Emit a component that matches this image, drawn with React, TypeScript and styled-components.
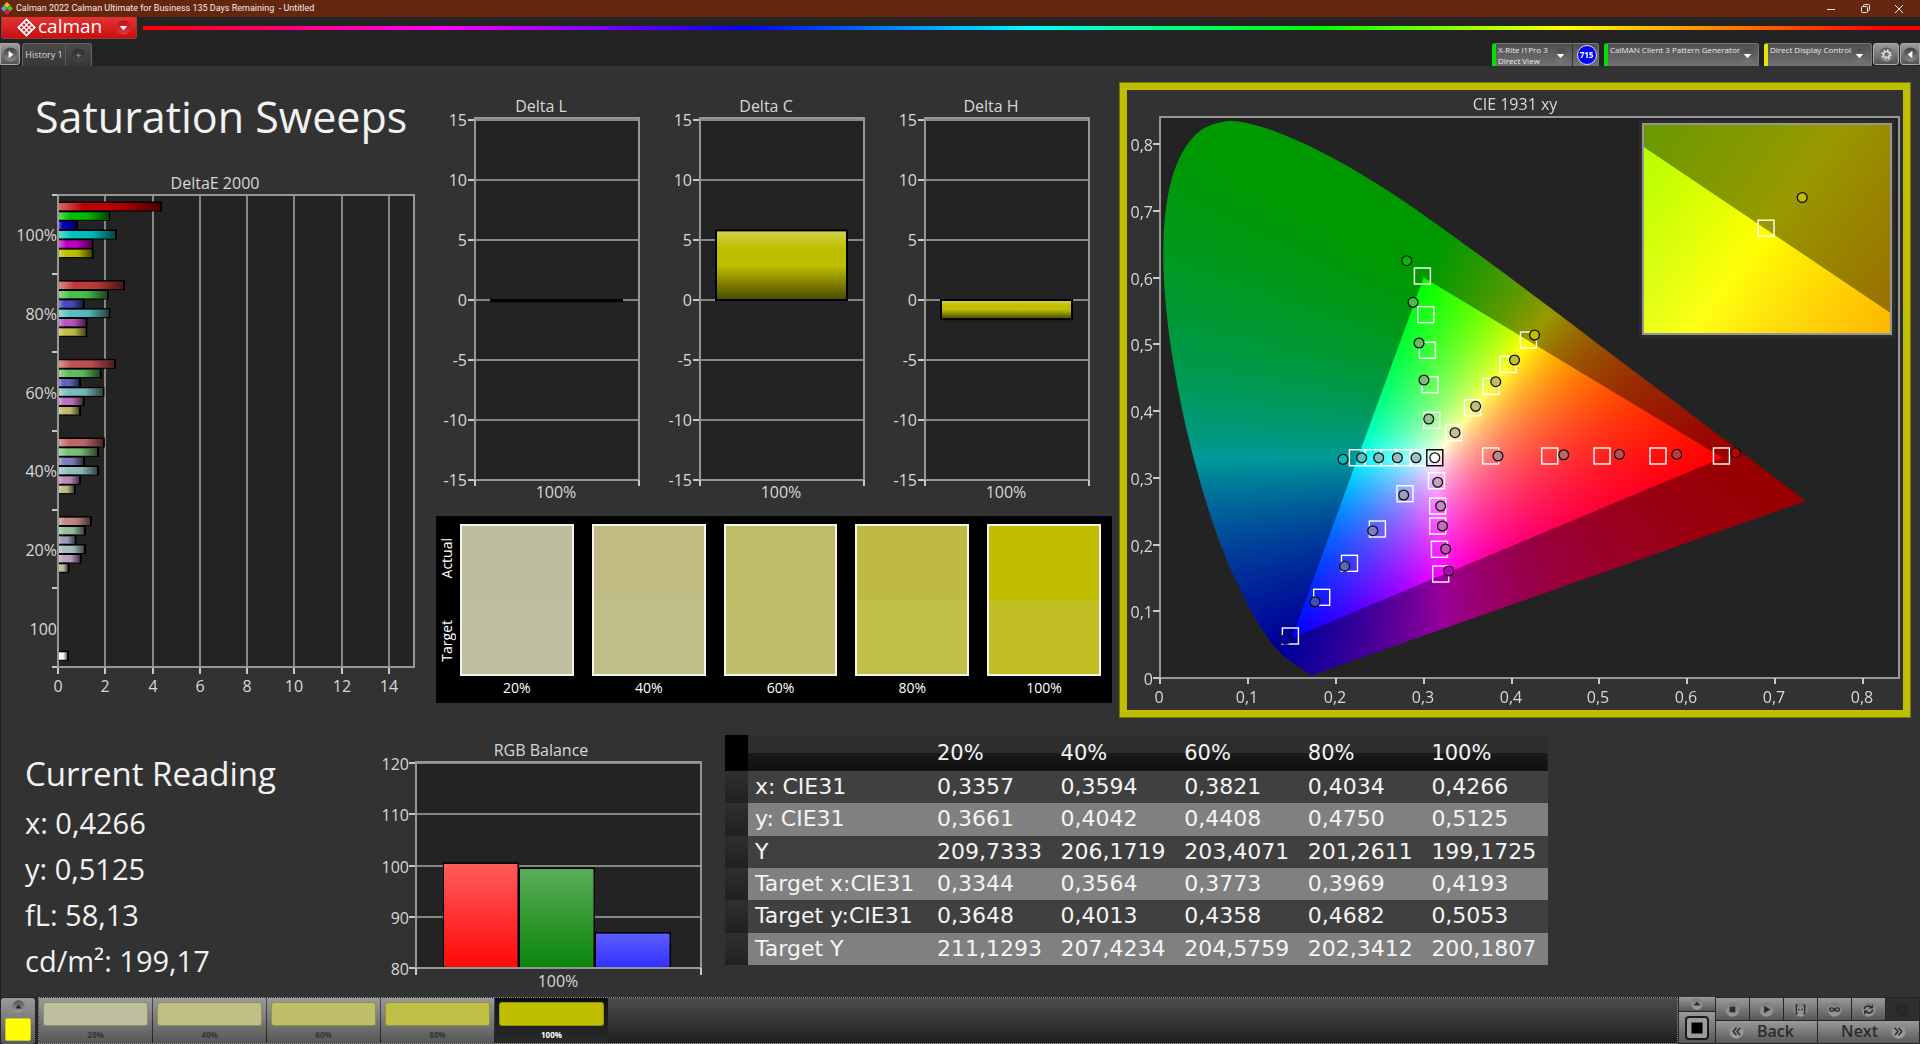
import React, { useLayoutEffect, useRef } from "react";
import styled, { createGlobalStyle, css } from "styled-components";

const GlobalStyle = createGlobalStyle`
  *, *::before, *::after { box-sizing: border-box; }
  body { margin: 0; background: #323232; font-family: "Open Sans", "Noto Sans", sans-serif; color: #f2f2f2; }
  button { font: inherit; color: inherit; margin: 0; padding: 0; border: 0; background: none; cursor: pointer; }
  h1, h2, p, ul, figure { margin: 0; padding: 0; }
`;

/* ---------- data ---------- */

const LEVELS = ["100%", "80%", "60%", "40%", "20%"];
const LOWS = [
  ["00", "3a", "50", "66", "86"],
  ["00", "48", "60", "78", "98"],
  ["00", "48", "62", "7c", "9c"],
  ["00", "58", "78", "90", "a4"],
  ["00", "50", "70", "88", "a2"],
  ["00", "48", "68", "84", "a0"],
];
const HUES: ((low: string) => string)[] = [
  (l) => `#bf${l}${l}`,
  (l) => `#${l}bf${l}`,
  (l) => `#${l}${l}bf`,
  (l) => `#${l}bfbf`,
  (l) => `#bf${l}bf`,
  (l) => `#bfbf${l}`,
];
const patchColor = (hue: number, level: number) => HUES[hue](LOWS[hue][level]);

const DELTA_E = [
  [4.36, 2.17, 0.8, 2.45, 1.46, 1.46],
  [2.79, 2.11, 1.08, 2.17, 1.2, 1.2],
  [2.41, 1.8, 0.93, 1.92, 1.08, 0.93],
  [1.94, 1.69, 1.1, 1.69, 0.93, 0.7],
  [1.39, 1.14, 0.74, 1.14, 0.95, 0.44],
];

const SWATCHES = [
  { label: "20%", actual: "#bfbda0", target: "#bfbfa3" },
  { label: "40%", actual: "#bfbb82", target: "#bfbe86" },
  { label: "60%", actual: "#bebc67", target: "#bfbe6a" },
  { label: "80%", actual: "#bfbb42", target: "#bfbf4a" },
  { label: "100%", actual: "#c1bd00", target: "#c1bf23" },
];

const STRIP = [
  { label: "20%", color: "#bfbfa0" },
  { label: "40%", color: "#bfbe84" },
  { label: "60%", color: "#bfbf69" },
  { label: "80%", color: "#bfbf48" },
  { label: "100%", color: "#bfbf00" },
];

const COLUMNS = ["20%", "40%", "60%", "80%", "100%"];
const READINGS: [string, string[]][] = [
  ["x: CIE31", ["0,3357", "0,3594", "0,3821", "0,4034", "0,4266"]],
  ["y: CIE31", ["0,3661", "0,4042", "0,4408", "0,4750", "0,5125"]],
  ["Y", ["209,7333", "206,1719", "203,4071", "201,2611", "199,1725"]],
  ["Target x:CIE31", ["0,3344", "0,3564", "0,3773", "0,3969", "0,4193"]],
  ["Target y:CIE31", ["0,3648", "0,4013", "0,4358", "0,4682", "0,5053"]],
  ["Target Y", ["211,1293", "207,4234", "204,5759", "202,3412", "200,1807"]],
];

type XY = [number, number];

/* Sweeps run from full saturation to 20%, in the order of HUES. */
const TARGETS: XY[][] = [
  [[0.6389, 0.3326], [0.5667, 0.3326], [0.503, 0.3326], [0.4435, 0.3326], [0.3763, 0.3326]],
  [[0.2986, 0.6022], [0.3024, 0.5443], [0.3043, 0.4909], [0.3072, 0.4394], [0.3092, 0.386]],
  [[0.1484, 0.0629], [0.184, 0.1209], [0.2156, 0.1718], [0.2474, 0.2232], [0.2788, 0.2761]],
  [[0.2246, 0.33], [0.2424, 0.33], [0.2603, 0.33], [0.2773, 0.33], [0.294, 0.33]],
  [[0.3194, 0.1558], [0.318, 0.1928], [0.316, 0.2277], [0.316, 0.2577], [0.3146, 0.2956]],
  [[0.4193, 0.5063], [0.3962, 0.4699], [0.3769, 0.4369], [0.3557, 0.4049], [0.334, 0.3675]],
];
const ACTUALS: XY[][] = [
  [[0.6552, 0.3376], [0.588, 0.3351], [0.5228, 0.3351], [0.4594, 0.3345], [0.3846, 0.3326]],
  [[0.2808, 0.6252], [0.288, 0.5628], [0.2948, 0.5019], [0.3004, 0.4464], [0.3058, 0.388]],
  [[0.143, 0.0581], [0.1764, 0.1143], [0.2102, 0.1673], [0.2421, 0.2207], [0.2773, 0.2742]],
  [[0.2083, 0.3276], [0.2295, 0.33], [0.2489, 0.33], [0.2701, 0.33], [0.2913, 0.33]],
  [[0.3285, 0.1603], [0.3251, 0.1933], [0.3214, 0.2277], [0.3194, 0.2577], [0.316, 0.2932]],
  [[0.4262, 0.5139], [0.4034, 0.4764], [0.3821, 0.4439], [0.3592, 0.407], [0.3357, 0.3675]],
];

const LOCUS: XY[] = [
  [0.1741, 0.005], [0.1714, 0.0051], [0.1689, 0.0069], [0.1644, 0.0109], [0.1566, 0.0177], [0.144, 0.0297],
  [0.1355, 0.0399], [0.1241, 0.0578], [0.1096, 0.0868], [0.0913, 0.1327], [0.0687, 0.2007], [0.0454, 0.295],
  [0.0235, 0.4127], [0.0082, 0.5384], [0.0039, 0.6548], [0.0139, 0.7502], [0.0389, 0.812], [0.0743, 0.8338],
  [0.1142, 0.8262], [0.1547, 0.8059], [0.1929, 0.7816], [0.2296, 0.7543], [0.2658, 0.7243], [0.3016, 0.6923],
  [0.3731, 0.6245], [0.4441, 0.5547], [0.5125, 0.4866], [0.5752, 0.4242], [0.627, 0.3725], [0.6658, 0.334],
  [0.6915, 0.3083], [0.719, 0.2809], [0.7347, 0.2653],
];
const PRIMARIES: XY[] = [[0.64, 0.33], [0.3, 0.6], [0.15, 0.06]];

/* ---------- frame ---------- */

const Page = styled.div`
  min-height: 100vh;
  display: flex;
  flex-direction: column;
  background: #323232;
`;

const TitleBar = styled.header`
  height: 17px;
  display: flex;
  align-items: center;
  gap: 3px;
  padding: 0 15px 0 1px;
  background: #64260f;
  font-family: Roboto, "Open Sans", sans-serif;
  font-size: 9px;
  line-height: 17px;
  color: #f4ece9;
  white-space: pre;
`;
const WindowControls = styled.div`
  margin-left: auto;
  display: flex;
  gap: 22px;
`;
const WindowButton = styled.button`
  width: 12px;
  height: 17px;
  display: grid;
  place-items: center;
`;

const Brand = styled.div`
  height: 26px;
  display: flex;
  align-items: flex-start;
  background: #232323;
  gap: 6px;
  padding-left: 1px;
`;
const BrandButton = styled.button`
  width: 136px;
  height: 22px;
  display: flex;
  align-items: center;
  gap: 2px;
  padding: 0 5px 0 15px;
  border: 1px solid #8a4040;
  border-top: 0;
  border-radius: 0 0 3px 3px;
  background: linear-gradient(#e23434, #c90f10);
  color: #fff;
  font-size: 19px;
  line-height: 20px;
  font-weight: 500;
  svg:last-child { margin-left: auto; }
`;
const BrandName = styled.span`
  padding-bottom: 4px;
`;
const Spectrum = styled.div`
  flex: 1;
  height: 4px;
  margin-top: 9px;
  background: linear-gradient(to right, #f00, #f0f 17%, #00f 34%, #0ff 50%, #0f0 66%, #ff0 80%, #f00 98%);
`;

const TabRow = styled.nav`
  height: 23px;
  display: flex;
  align-items: flex-start;
  background: #232323;
  font-size: 9px;
`;
const EdgeButton = styled.button<{ $w: number; $side?: "left" | "right" }>`
  width: ${(p) => p.$w}px;
  height: 22px;
  display: grid;
  place-items: center;
  border: 1px solid #aaa;
  border-radius: ${(p) => (p.$side === "left" ? "0 3px 3px 0" : p.$side === "right" ? "3px 0 0 3px" : "3px")};
  background: linear-gradient(#9a9a9a, #555);
`;
const HistoryTabs = styled.div`
  margin-left: 2px;
  display: flex;
  height: 23px;
  border: 1px solid #666;
  border-bottom: 0;
  border-radius: 3px 3px 0 0;
  background: linear-gradient(#4b4b4b, #363636);
  color: #ddd;
`;
const Tab = styled.button`
  width: 43px;
  line-height: 22px;
  border-right: 1px solid #5c5c5c;
`;
const AddTab = styled.button`
  width: 25px;
  display: grid;
  place-items: center;
`;
const Devices = styled.div`
  margin-left: auto;
  display: flex;
  align-items: flex-start;
  gap: 5px;
`;
const Device = styled.div<{ $w: number; $light: string }>`
  width: ${(p) => p.$w}px;
  height: 23px;
  display: flex;
  border: 1px solid #777;
  border-bottom: 0;
  border-left: 4px solid ${(p) => p.$light};
  border-radius: 3px 3px 0 0;
  background: linear-gradient(#505050, #727272);
`;
const DeviceMenu = styled.button`
  flex: 1;
  display: flex;
  align-items: flex-start;
  justify-content: space-between;
  padding: 0 4px 0 2px;
  text-align: left;
  font-size: 8px;
  line-height: 11px;
  font-weight: 500;
  color: #ececec;
  white-space: pre;
  svg { margin-top: 4px; }
`;
const Counter = styled.span`
  width: 26px;
  height: 22px;
  padding-left: 2px;
  display: grid;
  place-items: center;
  border-left: 1px solid #333;
`;
const CounterBadge = styled.span`
  width: 20px;
  height: 20px;
  border-radius: 50%;
  border: 1px solid #ddd;
  background: #0000ff;
  font-size: 8px;
  line-height: 18px;
  font-weight: 700;
  text-align: center;
  color: #fff;
`;
const EdgeGroup = styled.div`
  display: flex;
  gap: 1px;
  margin-left: -4px;
`;

/* ---------- workspace ---------- */

const Workspace = styled.main`
  flex: 1;
  border-left: 1px solid #1e1e1e;
  background: #323232;
`;
const TopRow = styled.section`
  display: grid;
  grid-template-columns: 429fr 689fr 792fr 9fr;
  align-items: start;
`;
const Heading = styled.h1`
  margin: 22px 0 28px;
  padding-left: 34px;
  font-size: 43px;
  line-height: 58px;
  font-weight: 400;
`;
const Chart = styled.svg`
  display: block;
  width: 100%;
  height: auto;
  font-size: 16px;
  fill: #d8d8d8;
`;
const Middle = styled.div`
  padding-top: 30px;
`;
const DeltaRow = styled.div`
  display: grid;
  grid-template-columns: repeat(3, 1fr);
  padding-right: 14px;
`;

const SwatchPanel = styled.section`
  margin: 10px 7px 0 6px;
  padding: 8px 11px 3px 0;
  display: flex;
  background: #000;
  color: #fff;
  font-size: 14px;
`;
const SwatchSides = styled.div`
  width: 24px;
  height: 152px;
  padding: 14px 0;
  display: flex;
  flex-direction: column;
  justify-content: space-between;
  span {
    writing-mode: vertical-rl;
    transform: rotate(180deg);
    line-height: 22px;
  }
`;
const SwatchList = styled.ul`
  flex: 1;
  display: grid;
  grid-template-columns: repeat(5, 1fr);
  gap: 18px;
  list-style: none;
  text-align: center;
  line-height: 24px;
`;
const Swatch = styled.div<{ $actual: string; $target: string }>`
  height: 152px;
  border: 2px solid #f4f4e8;
  background: linear-gradient(${(p) => p.$actual} 50%, ${(p) => p.$target} 50%);
`;

const CiePanel = styled.section`
  position: relative;
  margin-top: 16px;
  border: 8px solid #bfbf00;
  outline: 1px solid #76760a;
  outline-offset: -1px;
`;
const GamutCanvas = styled.canvas`
  position: absolute;
  inset: 0;
  width: 100%;
  height: 100%;
`;
const CieOverlay = styled(Chart)`
  position: relative;
`;

const BottomRow = styled.section`
  display: flex;
  align-items: flex-start;
`;
const Current = styled.div`
  width: 369px;
  padding: 30px 0 0 24px;
`;
const CurrentTitle = styled.h2`
  font-size: 33px;
  line-height: 52px;
  font-weight: 400;
`;
const CurrentValue = styled.p`
  font-size: 29px;
  line-height: 46px;
`;
const BalanceChart = styled.div`
  width: 340px;
  padding-top: 20px;
`;

const DataTable = styled.table`
  margin: 17px 0 0 15px;
  border-collapse: collapse;
  table-layout: fixed;
  width: 823px;
  height: 230px;
  font-family: "DejaVu Sans", sans-serif;
  font-size: 22px;
  line-height: 28px;
  color: #f4f4f4;
  th, td { padding: 2px 0 2px 7px; text-align: left; font-weight: 400; white-space: nowrap; }
`;
const HeadRow = styled.tr`
  height: 36px;
  font-size: 21px;
  background: linear-gradient(#2d2d2d 50%, #1a1a1a 50%, #101010);
`;
const BodyRow = styled.tr<{ $light: boolean }>`
  background: ${(p) => (p.$light ? "#808080" : "#404040")};
`;
const Gutter = styled.td<{ $head?: boolean }>`
  width: 23px;
  background: ${(p) => (p.$head ? "#000" : "linear-gradient(#303030, #202020)")};
`;
const NameCol = styled.col`
  width: 182px;
`;
const GutterCol = styled.col`
  width: 23px;
`;

/* ---------- bottom bar ---------- */

const steel = css`
  background: linear-gradient(#9a9a9a, #585858);
`;
const Dock = styled.footer`
  height: 47px;
  display: flex;
  padding: 0 1px 0 1px;
  background: #262626;
`;
const DockToggle = styled.button`
  width: 34px;
  height: 46px;
  margin: 1px 3px 0 0;
  padding: 2px 4px 3px;
  display: flex;
  flex-direction: column;
  align-items: center;
  justify-content: space-between;
  border-radius: 3px;
  ${steel}
`;
const CurrentPatch = styled.span`
  width: 26px;
  height: 23px;
  border-radius: 2px;
  border: 1px solid #c8c83a;
  background: #ffff00;
`;
const Strip = styled.div`
  flex: 1;
  display: flex;
  gap: 1px;
  border: 1px dotted #8a8a8a;
  background: linear-gradient(#4c4c4c, #202020);
`;
const StripButton = styled.button<{ $on: boolean }>`
  width: 113px;
  padding: 4px 4px 0;
  display: flex;
  flex-direction: column;
  align-items: center;
  font-size: 8px;
  line-height: 17px;
  font-weight: 700;
  color: ${(p) => (p.$on ? "#fff" : "#333")};
  ${steel}
  ${(p) => p.$on && css`background: linear-gradient(#111, #2b2b2b);`}
`;
const StripPatch = styled.span<{ $color: string }>`
  width: 105px;
  height: 27px;
  border-radius: 3px;
  border: 1px solid rgba(90, 90, 40, 0.45);
  background: ${(p) => p.$color};
`;
const Controls = styled.div`
  margin-left: 1px;
  display: grid;
  grid-template-columns: 36px 203px;
  gap: 1px;
`;
const StopColumn = styled.div`
  display: grid;
  grid-template-rows: 14px 31px;
  gap: 1px;
`;
const Transport = styled.div`
  display: grid;
  grid-template-columns: repeat(6, 33px);
  grid-template-rows: 22px 22px;
  gap: 1px;
  padding-top: 1px;
`;
const SteelButton = styled.button<{ $off?: boolean }>`
  ${steel}
  display: flex;
  align-items: center;
  justify-content: center;
  ${(p) => p.$off && css`background: #2e2e2e;`}
`;
const StepButton = styled.button<{ $end?: boolean }>`
  ${steel}
  grid-column: span 3;
  display: flex;
  align-items: center;
  justify-content: ${(p) => (p.$end ? "flex-end" : "flex-start")};
  gap: 13px;
  padding: 0 13px 2px;
  font-size: 16px;
  line-height: 20px;
  font-weight: 600;
  color: #2b2b2b;
`;

/* ---------- small icons ---------- */

const Disc = ({ size = 15, dark = "#3d3d3d", light = "#7a7a7a", children }: { size?: number; dark?: string; light?: string; children?: React.ReactNode }) => {
  const id = `disc${dark.slice(1)}${light.slice(1)}`;
  return (
    <svg width={size} height={size} viewBox="0 0 16 16" aria-hidden="true">
      <defs>
        <linearGradient id={id} x1="0" y1="0" x2="0" y2="1">
          <stop offset="0" stopColor={dark} />
          <stop offset="1" stopColor={light} />
        </linearGradient>
      </defs>
      <circle cx="8" cy="8" r="7.6" fill={`url(#${id})`} />
      {children}
    </svg>
  );
};
const DownDisc = () => (
  <Disc dark="#4a4a4a" light="#777777"><path d="M4 6.5h8L8 11z" fill="#fff" /></Disc>
);

const AppIcon = () => (
  <svg width="12" height="13" viewBox="0 0 12 13" aria-hidden="true">
    <path d="M6 0l3 3-3 3-3-3z" fill="#f5c400" />
    <path d="M3 3.5l3 3-3 3-3-3z" fill="#3fb4ea" />
    <path d="M9 3.5l3 3-3 3-3-3z" fill="#4cc12c" />
    <path d="M6 7l3 3-3 3-3-3z" fill="#e8184f" />
  </svg>
);
const BrandMark = () => (
  <svg width="19" height="19" viewBox="0 0 19 19" aria-hidden="true">
    <path d="M9.5 .6 18.4 9.5 9.5 18.4 .6 9.5z" fill="#fff" stroke="#fff" strokeWidth="1" strokeLinejoin="round" />
    <g fill="#d62324">
      {[[9.5, 4.3], [6.9, 6.9], [12.1, 6.9], [4.3, 9.5], [9.5, 9.5], [14.7, 9.5], [6.9, 12.1], [12.1, 12.1], [9.5, 14.7]].map(([x, y]) => (
        <circle key={`${x}-${y}`} cx={x} cy={y} r="1.35" />
      ))}
    </g>
  </svg>
);

/* ---------- charts ---------- */

const Line = styled.line`
  stroke: #868686;
  stroke-width: 2;
`;
const Tick = styled.line`
  stroke: #c8c8c8;
  stroke-width: 2;
`;
const PlotArea = styled.rect`
  fill: #232323;
`;
const Frame = styled.rect`
  fill: none;
  stroke: #969696;
  stroke-width: 2;
`;

const DeltaEChart = () => {
  const left = 57, top = 21, bottom = 493, right = 413, unit = 331 / 14, band = 472 / 6, slot = 28 / 3;
  const axis = [0, 2, 4, 6, 8, 10, 12, 14];
  const bars = DELTA_E.flatMap((row, g) =>
    row.map((v, i) => ({ key: `${g}-${i}`, v, color: patchColor(i, g), y: top + g * band + 7 + i * slot })),
  );
  bars.push({ key: "white", v: 0.42, color: "#ffffff", y: top + 5 * band + 7 + 6 * slot });
  return (
    <Chart viewBox="0 0 429 528" role="img" aria-label="DeltaE 2000">
      <defs>
        <linearGradient id="gloss-h" x1="0" x2="1">
          <stop offset="0" stopColor="#fff" stopOpacity=".42" />
          <stop offset=".25" stopColor="#fff" stopOpacity="0" />
          <stop offset=".6" stopColor="#000" stopOpacity=".05" />
          <stop offset="1" stopColor="#000" stopOpacity=".62" />
        </linearGradient>
      </defs>
      <text x="214" y="15" textAnchor="middle">DeltaE 2000</text>
      <PlotArea x={left} y={top} width={right - left} height={bottom - top} />
      {axis.map((v) => {
        const x = Math.round(left + v * unit);
        return (
          <g key={v}>
            <Line x1={x} x2={x} y1={top} y2={bottom} />
            <Tick x1={x} x2={x} y1={bottom} y2={bottom + 7} />
            <text x={x} y={bottom + 25} textAnchor="middle">{v}</text>
          </g>
        );
      })}
      {[...LEVELS, "100"].map((label, i) => (
        <text key={i} x={left - 1} y={top + (i + 0.5) * band + 7} textAnchor="end">{label}</text>
      ))}
      {[0, 1, 2, 3, 4, 5, 6].map((i) => {
        const y = Math.round(top + i * band);
        return <Tick key={i} x1={left - 6} x2={left} y1={y} y2={y} />;
      })}
      {bars.map((b) => (
        <g key={b.key}>
          <rect x={left} y={b.y - 0.5} width={b.v * unit + 1} height="10" fill="#000" />
          <rect x={left} y={b.y + 1} width={b.v * unit - 1} height="7.4" fill={b.color} />
          <rect x={left} y={b.y + 1} width={b.v * unit - 1} height="7.4" fill="url(#gloss-h)" />
        </g>
      ))}
      <Frame x={left} y={top} width={right - left} height={bottom - top} />
    </Chart>
  );
};

const DeltaChart = ({ title, value }: { title: string; value: number }) => {
  const left = 45, right = 209, top = 22, y15 = 24, y0 = 204, unit = 12;
  const bottom = y0 + 15 * unit;
  const y = value >= 0 ? y0 - value * unit : y0;
  const h = Math.abs(value) * unit;
  const id = `gloss-${title.replace(" ", "")}`;
  return (
    <Chart viewBox="0 0 225 410" role="img" aria-label={title}>
      <defs>
        <linearGradient id={id} x1="0" x2="0" y1="0" y2="1">
          <stop offset="0" stopColor="#d2d24e" />
          <stop offset=".25" stopColor="#bfbf00" />
          <stop offset=".5" stopColor="#bfbf00" />
          <stop offset="1" stopColor="#4c4c00" />
        </linearGradient>
      </defs>
      <text x="111" y="16" textAnchor="middle">{title}</text>
      <PlotArea x={left} y={top} width={right - left} height={bottom - top} />
      {[15, 10, 5, 0, -5, -10, -15].map((v) => {
        const ly = v === 15 ? y15 : y0 - v * unit;
        return (
          <g key={v}>
            <Line x1={left} x2={right} y1={ly} y2={ly} />
            <Tick x1={left - 7} x2={left} y1={ly} y2={ly} />
            <text x={left - 8} y={ly + 6} textAnchor="end">{v}</text>
          </g>
        );
      })}
      <Frame x={left} y={top} width={right - left} height={bottom - top} />
      <Tick x1={left} x2={left} y1={bottom} y2={bottom + 6} />
      <Tick x1={right} x2={right} y1={bottom} y2={bottom + 6} />
      <rect x="60" y={y - 1} width="133" height={h + 2} fill="#000" />
      {h > 2 && <rect x="62" y={y + 1} width="129" height={h - 2} fill={`url(#${id})`} />}
      <text x="126" y={bottom + 18} textAnchor="middle">100%</text>
    </Chart>
  );
};

const RgbBalance = () => {
  const left = 46, right = 331, bottom = 230, unit = 205 / 40;
  const bars = [
    { x: 73, v: 100.6, from: "#ff5c5c", to: "#ff0808" },
    { x: 149, v: 99.6, from: "#5aad5a", to: "#0a850a" },
    { x: 225, v: 87, from: "#5c5cff", to: "#3030ff" },
  ];
  return (
    <Chart viewBox="0 0 340 252" role="img" aria-label="RGB Balance">
      <text x="171" y="18" textAnchor="middle">RGB Balance</text>
      <PlotArea x={left} y={23} width={right - left} height={bottom - 23} />
      {[120, 110, 100, 90, 80].map((v) => {
        const y = Math.round(bottom - (v - 80) * unit);
        return (
          <g key={v}>
            <Line x1={left} x2={right} y1={y} y2={y} />
            <Tick x1={left - 7} x2={left} y1={y} y2={y} />
            <text x={left - 7} y={y + 7} textAnchor="end">{v}</text>
          </g>
        );
      })}
      {bars.map((b, i) => {
        const y = bottom - (b.v - 80) * unit;
        return (
          <g key={b.x}>
            <defs>
              <linearGradient id={`rgb${i}`} x1="0" x2="0" y1="0" y2="1">
                <stop offset="0" stopColor={b.from} />
                <stop offset="1" stopColor={b.to} />
              </linearGradient>
            </defs>
            <rect x={b.x} y={y} width="76" height={bottom - y} fill="#000" />
            <rect x={b.x + 1} y={y + 1.5} width="73.5" height={bottom - y - 1.5} fill={`url(#rgb${i})`} />
          </g>
        );
      })}
      <Frame x={left} y={24} width={right - left} height={bottom - 24} />
      <Tick x1={left} x2={left} y1={bottom} y2={bottom + 7} />
      <Tick x1={right} x2={right} y1={bottom} y2={bottom + 7} />
      <text x="188" y={bottom + 19} textAnchor="middle">100%</text>
    </Chart>
  );
};

/* ---------- chromaticity diagram ---------- */

const CIE = { w: 776, h: 620, left: 33, right: 772, top: 27, bottom: 588, sx: 878.75, sy: 667.5 };
const INSET = { x: 516, y: 34, w: 248, h: 210, cx: 0.4195, cy: 0.5053, span: 0.05 };
const cieX = (x: number) => CIE.left + x * CIE.sx;
const cieY = (y: number) => CIE.bottom - y * CIE.sy;
const insetX = (x: number) => INSET.x + INSET.w / 2 + ((x - INSET.cx) / INSET.span) * INSET.w;
const insetY = (y: number) => INSET.y + INSET.h / 2 - ((y - INSET.cy) / INSET.span) * INSET.h;

function chromaticity(x: number, y: number): [number, number, number] {
  const yy = Math.max(y, 0.0001);
  const X = x / yy;
  const Z = (1 - x - yy) / yy;
  const r = Math.max(0, 3.2406 * X - 1.5372 - 0.4986 * Z);
  const g = Math.max(0, -0.9689 * X + 1.8758 + 0.0415 * Z);
  const b = Math.max(0, 0.0557 * X - 0.204 + 1.057 * Z);
  const m = Math.max(r, g, b, 0.0001);
  return [r / m, g / m, b / m];
}

function shade(w: number, h: number, gain: number, at: (px: number, py: number) => XY) {
  const layer = document.createElement("canvas");
  layer.width = w;
  layer.height = h;
  const ctx = layer.getContext("2d")!;
  const img = ctx.createImageData(w, h);
  for (let py = 0; py < h; py++) {
    for (let px = 0; px < w; px++) {
      const [x, y] = at(px + 0.5, py + 0.5);
      const c = chromaticity(x, y);
      const o = (py * w + px) * 4;
      img.data[o] = c[0] * 255 * gain;
      img.data[o + 1] = c[1] * 255 * gain;
      img.data[o + 2] = c[2] * 255 * gain;
      img.data[o + 3] = 255;
    }
  }
  ctx.putImageData(img, 0, 0);
  return layer;
}

function tracePolygon(ctx: CanvasRenderingContext2D, pts: XY[]) {
  ctx.beginPath();
  pts.forEach(([x, y], i) => (i ? ctx.lineTo(x, y) : ctx.moveTo(x, y)));
  ctx.closePath();
}

/* Catmull-Rom spline through the locus, closed by the straight purple line. */
function traceLocus(ctx: CanvasRenderingContext2D, pts: XY[]) {
  ctx.beginPath();
  ctx.moveTo(pts[0][0], pts[0][1]);
  for (let i = 0; i < pts.length - 1; i++) {
    const p0 = pts[Math.max(0, i - 1)], p1 = pts[i], p2 = pts[i + 1], p3 = pts[Math.min(pts.length - 1, i + 2)];
    ctx.bezierCurveTo(
      p1[0] + (p2[0] - p0[0]) / 6, p1[1] + (p2[1] - p0[1]) / 6,
      p2[0] - (p3[0] - p1[0]) / 6, p2[1] - (p3[1] - p1[1]) / 6,
      p2[0], p2[1],
    );
  }
  ctx.closePath();
}

function paintGamut(canvas: HTMLCanvasElement) {
  const ctx = canvas.getContext("2d")!;
  ctx.fillStyle = "#232323";
  ctx.fillRect(CIE.left, CIE.top, CIE.right - CIE.left, CIE.bottom - CIE.top);

  const main = (px: number, py: number): XY => [(px - CIE.left) / CIE.sx, (CIE.bottom - py) / CIE.sy];
  ctx.save();
  traceLocus(ctx, LOCUS.map(([x, y]) => [cieX(x), cieY(y)]));
  ctx.clip();
  ctx.drawImage(shade(CIE.w, CIE.h, 0.6, main), 0, 0);
  tracePolygon(ctx, PRIMARIES.map(([x, y]) => [cieX(x), cieY(y)]));
  ctx.clip();
  ctx.drawImage(shade(CIE.w, CIE.h, 1, main), 0, 0);
  ctx.restore();

  const zoom = (px: number, py: number): XY => [
    INSET.cx + ((px - INSET.w / 2) / INSET.w) * INSET.span,
    INSET.cy - ((py - INSET.h / 2) / INSET.h) * INSET.span,
  ];
  ctx.fillStyle = "#2c2c2c";
  ctx.fillRect(INSET.x - 4, INSET.y - 4, INSET.w + 8, INSET.h + 8);
  ctx.drawImage(shade(INSET.w, INSET.h, 0.6, zoom), INSET.x, INSET.y);
  ctx.save();
  ctx.beginPath();
  ctx.rect(INSET.x, INSET.y, INSET.w, INSET.h);
  ctx.clip();
  tracePolygon(ctx, PRIMARIES.map(([x, y]) => [insetX(x), insetY(y)]));
  ctx.clip();
  ctx.drawImage(shade(INSET.w, INSET.h, 1, zoom), INSET.x, INSET.y);
  ctx.restore();
}

const TargetMark = ({ x, y, stroke = "#fff" }: { x: number; y: number; stroke?: string }) => (
  <rect x={x - 8} y={y - 8} width="16" height="16" fill="none" stroke={stroke} strokeWidth="1.4" />
);
const ActualMark = ({ x, y, fill }: { x: number; y: number; fill: string }) => (
  <circle cx={x} cy={y} r="4.9" fill={fill} stroke="#111" strokeWidth="1.3" />
);

const CieChart = () => {
  const ref = useRef<HTMLCanvasElement>(null);
  useLayoutEffect(() => {
    if (ref.current) paintGamut(ref.current);
  }, []);
  const steps = [0, 1, 2, 3, 4, 5, 6, 7, 8];
  const name = (v: number) => (v ? `0,${v}` : "0");
  return (
    <CiePanel>
      <GamutCanvas ref={ref} width={CIE.w} height={CIE.h} />
      <CieOverlay viewBox={`0 0 ${CIE.w} ${CIE.h}`} role="img" aria-label="CIE 1931 xy">
        <text x="388" y="20" textAnchor="middle">CIE 1931 xy</text>
        <Frame x={CIE.left} y={CIE.top} width={CIE.right - CIE.left} height={CIE.bottom - CIE.top} />
        {steps.map((v) => {
          const x = Math.round(cieX(v / 10));
          const y = Math.round(cieY(v / 10));
          return (
            <g key={v}>
              <Tick x1={x} x2={x} y1={CIE.bottom} y2={CIE.bottom + 6} />
              <Tick x1={CIE.left - 7} x2={CIE.left} y1={y} y2={y} />
              <text x={x - 1} y={CIE.bottom + 25} textAnchor="middle">{name(v)}</text>
              <text x={CIE.left - 7} y={y + 7} textAnchor="end">{name(v)}</text>
            </g>
          );
        })}
        {TARGETS.flatMap((sweep, s) => sweep.map(([x, y], i) => <TargetMark key={`t${s}${i}`} x={cieX(x)} y={cieY(y)} />))}
        <TargetMark x={cieX(0.3127)} y={cieY(0.33)} stroke="#000" />
        {ACTUALS.flatMap((sweep, s) =>
          sweep.map(([x, y], i) => <ActualMark key={`a${s}${i}`} x={cieX(x)} y={cieY(y)} fill={patchColor(s, i)} />),
        )}
        <ActualMark x={cieX(0.3127)} y={cieY(0.33)} fill="#fff" />
        <Frame x={INSET.x} y={INSET.y} width={INSET.w} height={INSET.h} />
        <TargetMark x={insetX(0.4193)} y={insetY(0.5055)} />
        <ActualMark x={insetX(0.4266)} y={insetY(0.5128)} fill="#bfbf00" />
      </CieOverlay>
    </CiePanel>
  );
};

/* ---------- app ---------- */

const ink = "#2b2b2b";

export default function App() {
  return (
    <Page>
      <GlobalStyle />
      <TitleBar>
        <AppIcon />
        <span>{"Calman 2022 Calman Ultimate for Business 135 Days Remaining  - Untitled"}</span>
        <WindowControls>
          <WindowButton aria-label="Minimize">
            <svg width="8" height="8" viewBox="0 0 8 8"><path d="M0 4.5h8" stroke="#eee" /></svg>
          </WindowButton>
          <WindowButton aria-label="Restore">
            <svg width="9" height="9" viewBox="0 0 9 9" fill="none" stroke="#eee"><rect x=".5" y="2.5" width="6" height="6" rx="1" /><path d="M2.5 2V1.5a1 1 0 0 1 1-1h4a1 1 0 0 1 1 1v4a1 1 0 0 1-1 1h-.5" /></svg>
          </WindowButton>
          <WindowButton aria-label="Close">
            <svg width="8" height="8" viewBox="0 0 8 8"><path d="M0 0l8 8M8 0L0 8" stroke="#eee" /></svg>
          </WindowButton>
        </WindowControls>
      </TitleBar>

      <Brand>
        <BrandButton aria-label="calman menu">
          <BrandMark />
          <BrandName>calman</BrandName>
          <Disc dark="#b5121a" light="#e0393c"><path d="M4 6.5h8L8 11z" fill="#fff" /></Disc>
        </BrandButton>
        <Spectrum />
      </Brand>

      <TabRow>
        <EdgeButton $w={20} $side="left" aria-label="Expand">
          <Disc dark="#3f3f3f" light="#8a8a8a"><path d="M6 4v8l5-4z" fill="#fff" /></Disc>
        </EdgeButton>
        <HistoryTabs>
          <Tab>History 1</Tab>
          <AddTab aria-label="Add history">
            <Disc dark="#323232" light="#444444"><path d="M8 5.5v5M5.5 8h5" stroke="#8a8a8a" /></Disc>
          </AddTab>
        </HistoryTabs>
        <Devices>
          <Device $w={107} $light="#00e000">
            <DeviceMenu aria-haspopup="menu">{"X-Rite i1Pro 3\nDirect View"}<DownDisc /></DeviceMenu>
            <Counter><CounterBadge>715</CounterBadge></Counter>
          </Device>
          <Device $w={155} $light="#00e000">
            <DeviceMenu aria-haspopup="menu">CalMAN Client 3 Pattern Generator<DownDisc /></DeviceMenu>
          </Device>
          <Device $w={108} $light="#e6e600">
            <DeviceMenu aria-haspopup="menu">Direct Display Control<DownDisc /></DeviceMenu>
          </Device>
          <EdgeGroup>
            <EdgeButton $w={26} aria-label="Settings">
              <Disc dark="#5a5a5a" light="#8a8a8a">
                <circle cx="8" cy="8" r="3.3" fill="none" stroke="#e2e2e2" strokeWidth="1.6" />
                <circle cx="8" cy="8" r="4.9" fill="none" stroke="#e2e2e2" strokeWidth="1.5" strokeDasharray="1.9 1.95" />
              </Disc>
            </EdgeButton>
            <EdgeButton $w={20} $side="right" aria-label="Collapse">
              <Disc dark="#3f3f3f" light="#8a8a8a"><path d="M10 4v8L5 8z" fill="#fff" /></Disc>
            </EdgeButton>
          </EdgeGroup>
        </Devices>
      </TabRow>

      <Workspace>
        <TopRow>
          <div>
            <Heading>Saturation Sweeps</Heading>
            <DeltaEChart />
          </div>
          <Middle>
            <DeltaRow>
              <DeltaChart title="Delta L" value={-0.1} />
              <DeltaChart title="Delta C" value={5.8} />
              <DeltaChart title="Delta H" value={-1.6} />
            </DeltaRow>
            <SwatchPanel>
              <SwatchSides>
                <span>Actual</span>
                <span>Target</span>
              </SwatchSides>
              <SwatchList>
                {SWATCHES.map((s) => (
                  <li key={s.label}>
                    <Swatch $actual={s.actual} $target={s.target} />
                    {s.label}
                  </li>
                ))}
              </SwatchList>
            </SwatchPanel>
          </Middle>
          <CieChart />
        </TopRow>

        <BottomRow>
          <Current>
            <CurrentTitle>Current Reading</CurrentTitle>
            <CurrentValue>x: 0,4266</CurrentValue>
            <CurrentValue>y: 0,5125</CurrentValue>
            <CurrentValue>fL: 58,13</CurrentValue>
            <CurrentValue>cd/m²: 199,17</CurrentValue>
          </Current>
          <BalanceChart>
            <RgbBalance />
          </BalanceChart>
          <DataTable>
            <colgroup>
              <GutterCol />
              <NameCol />
              {COLUMNS.map((c) => <col key={c} />)}
            </colgroup>
            <thead>
              <HeadRow>
                <Gutter $head />
                <td />
                {COLUMNS.map((c) => <th key={c} scope="col">{c}</th>)}
              </HeadRow>
            </thead>
            <tbody>
              {READINGS.map(([name, values], i) => (
                <BodyRow key={name} $light={i % 2 === 1}>
                  <Gutter />
                  <th scope="row">{name}</th>
                  {values.map((v) => <td key={v}>{v}</td>)}
                </BodyRow>
              ))}
            </tbody>
          </DataTable>
        </BottomRow>
      </Workspace>

      <Dock>
        <DockToggle aria-label="Show patches">
          <Disc size={13} dark="#555555" light="#a0a0a0"><path d="M4 10.5h8L8 5.5z" fill={ink} /></Disc>
          <CurrentPatch />
        </DockToggle>
        <Strip>
          {STRIP.map((s) => (
            <StripButton key={s.label} $on={s.label === "100%"}>
              <StripPatch $color={s.color} />
              {s.label}
            </StripButton>
          ))}
        </Strip>
        <Controls>
          <StopColumn>
            <SteelButton aria-label="Expand controls">
              <Disc size={12} dark="#777777" light="#a5a5a5"><path d="M3 10h10L8 5z" fill={ink} /></Disc>
            </SteelButton>
            <SteelButton aria-label="Stop pattern">
              <svg width="24" height="24" viewBox="0 0 24 24"><rect x="1" y="1" width="22" height="22" rx="3" fill="#9c9c9c" stroke="#1c1c1c" strokeWidth="2" /><rect x="6.5" y="6.5" width="11" height="11" fill="#000" /></svg>
            </SteelButton>
          </StopColumn>
          <Transport>
            <SteelButton aria-label="Stop">
              <Disc dark="#7c7c7c" light="#9a9a9a"><rect x="5" y="5" width="6" height="6" fill={ink} /></Disc>
            </SteelButton>
            <SteelButton aria-label="Play">
              <Disc dark="#7c7c7c" light="#9a9a9a"><path d="M5.5 4v8l6.500-4z" fill={ink} /></Disc>
            </SteelButton>
            <SteelButton aria-label="Range">
              <Disc dark="#7c7c7c" light="#9a9a9a"><path d="M5 3.5H3.5v9H5M11 3.5h1.5v9H11M5.5 8h1.5M9 8h1.5" fill="none" stroke={ink} strokeWidth="1.5" /></Disc>
            </SteelButton>
            <SteelButton aria-label="Loop">
              <Disc dark="#7c7c7c" light="#9a9a9a"><path d="M8 8C6.5 5.8 2.8 5.5 2.8 8s3.700 2.200 5.200 0 5.200-2.500 5.200 0S9.500 10.200 8 8z" fill="none" stroke={ink} strokeWidth="1.5" /></Disc>
            </SteelButton>
            <SteelButton aria-label="Refresh">
              <Disc dark="#7c7c7c" light="#9a9a9a"><path d="M3.500 7.500c.3-2.500 4-4.500 7-2M12.500 8.500c-.3 2.500-4 4.500-7 2" fill="none" stroke={ink} strokeWidth="1.7" /><path d="M12.800 2.500v4.500H8.300zM3.200 13.500V9h4.500z" fill={ink} /></Disc>
            </SteelButton>
            <SteelButton $off aria-label="Unavailable">
              <Disc dark="#282828" light="#262626" />
            </SteelButton>
            <StepButton>
              <Disc dark="#8a8a8a" light="#a0a0a0"><path d="M8 4L4.500 8 8 12M12 4L8.500 8l3.500 4" fill="none" stroke={ink} strokeWidth="1.5" /></Disc>
              Back
            </StepButton>
            <StepButton $end>
              Next
              <Disc dark="#8a8a8a" light="#a0a0a0"><path d="M8 4l3.500 4L8 12M4 4l3.500 4L4 12" fill="none" stroke={ink} strokeWidth="1.5" /></Disc>
            </StepButton>
          </Transport>
        </Controls>
      </Dock>
    </Page>
  );
}
